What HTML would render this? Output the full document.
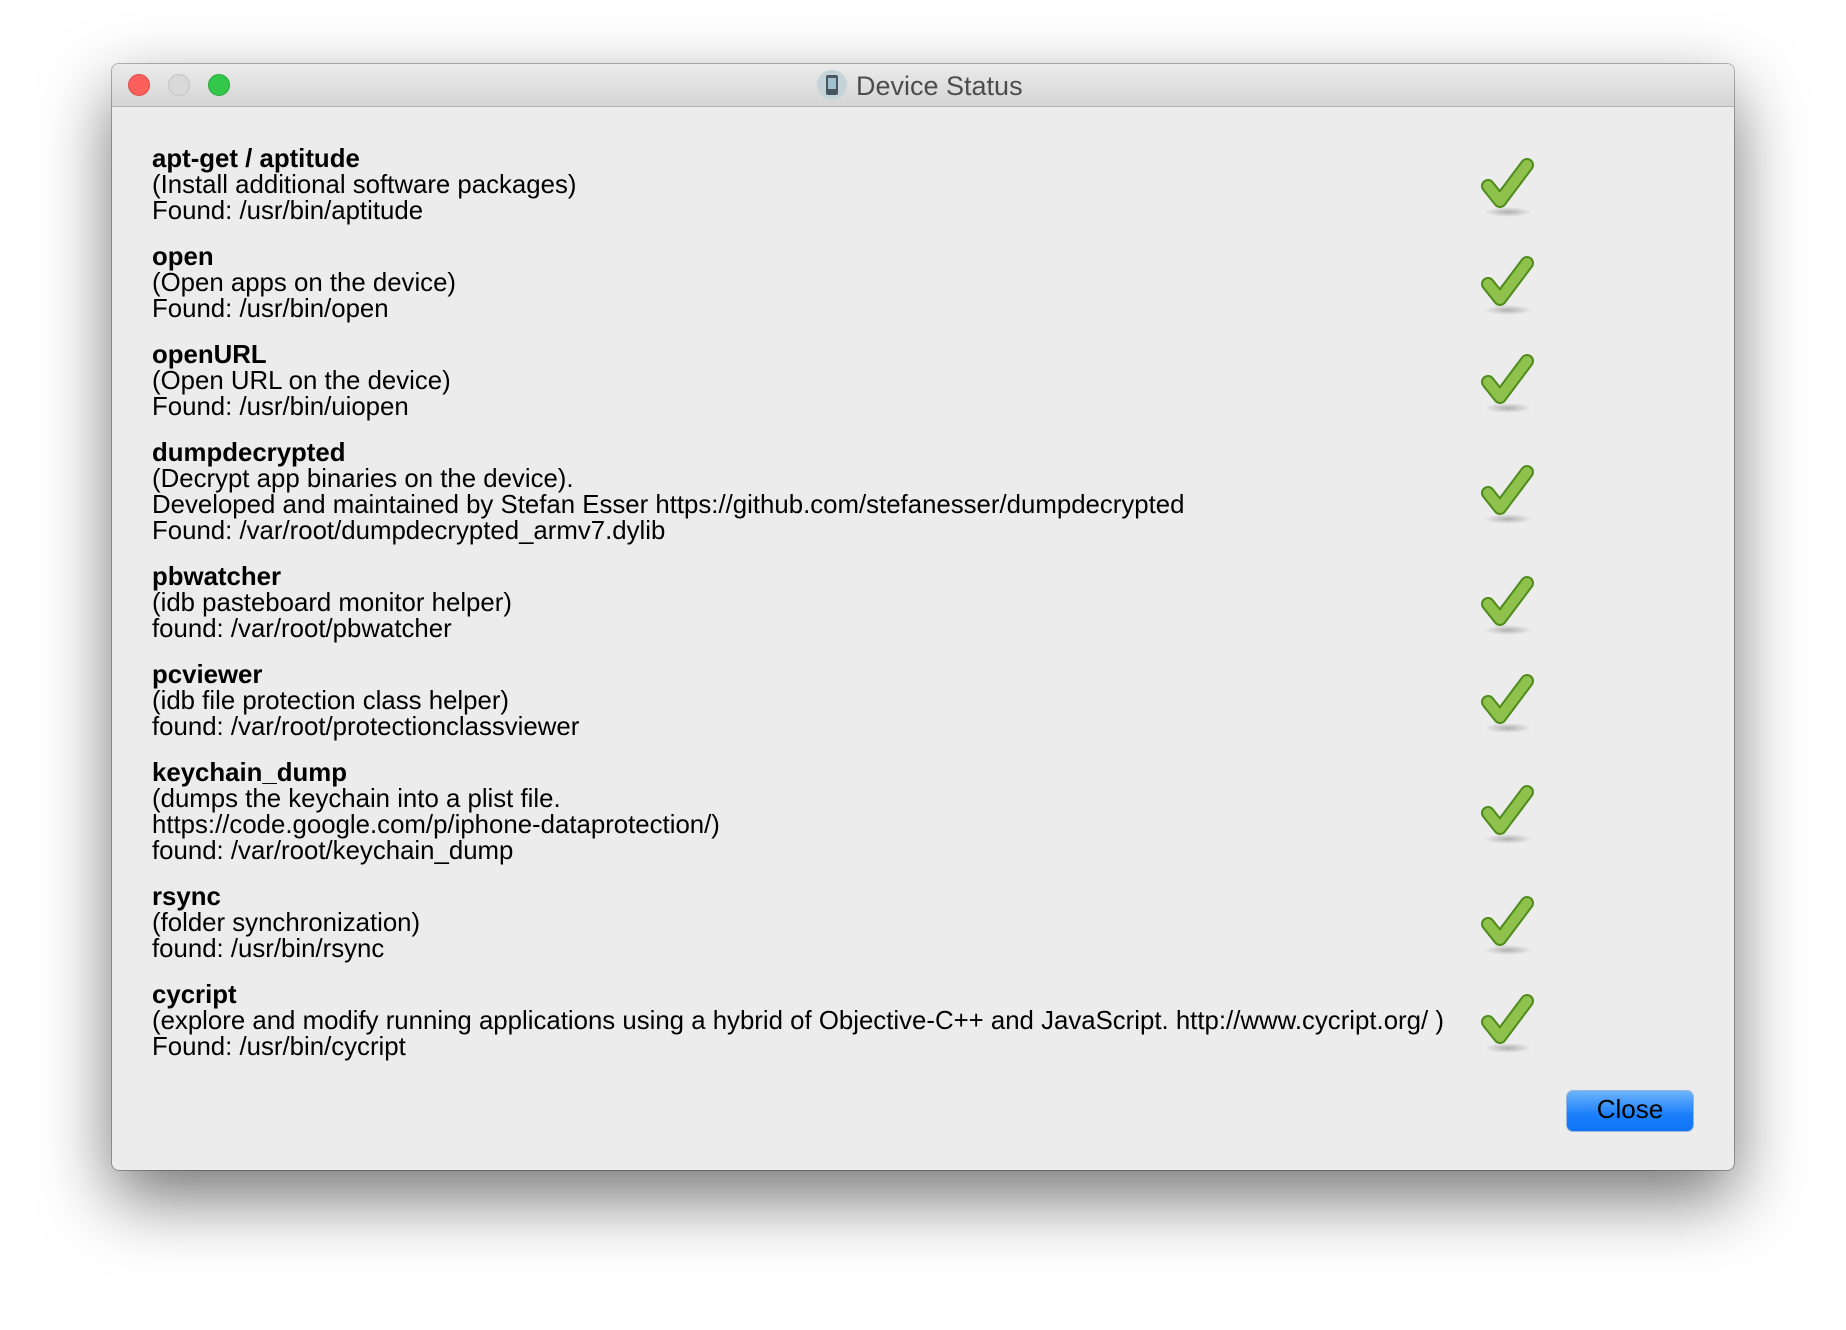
<!DOCTYPE html>
<html><head><meta charset="utf-8"><style>
html,body{margin:0;padding:0;width:1846px;height:1330px;background:#fff;overflow:hidden}
.win{position:absolute;left:112px;top:64px;width:1622px;height:1106px;background:#ececec;border-radius:7px;box-shadow:0 0 0 1px rgba(0,0,0,0.28),0 28px 70px rgba(0,0,0,0.55);overflow:hidden}
.tb{position:absolute;left:0;top:0;right:0;height:42px;background:linear-gradient(#ebebeb,#d5d5d5);border-bottom:1px solid #b3b3b3}
.dot{position:absolute;top:10px;width:22px;height:22px;border-radius:50%;box-sizing:border-box}
.title{position:absolute;left:704px;top:5px;font:27px "Liberation Sans",sans-serif;color:#4d4d4d;line-height:32px}
.items{position:absolute;left:40px;top:82px;font:25.8px "Liberation Sans",sans-serif;color:#000;line-height:26px}
.it{margin-bottom:20px;position:relative;width:1400px;white-space:nowrap}
.it b{font-weight:bold}
.ck{position:absolute;left:1326px;top:50%;margin-top:-29px}
.btn{position:absolute;left:1455px;top:1027px;width:126px;height:40px;border-radius:6px;background:linear-gradient(#6cb3fa,#1a7ffb 60%,#0f73f5);box-shadow:0 0 0 1px rgba(0,80,200,0.35);font:26px "Liberation Sans",sans-serif;text-align:center;line-height:36px;color:#000}
</style></head><body>
<div class="win">
<div class="tb">
<div class="dot" style="left:16px;background:#fc605c;border:1px solid #de4a45"></div>
<div class="dot" style="left:56px;background:#d9d9d9;border:1px solid #c2c2c2"></div>
<div class="dot" style="left:96px;background:#34c84a;border:1px solid #27a83a"></div>
<div class="title"><svg width="32" height="32" viewBox="0 0 32 32" style="vertical-align:-6px;margin-right:8px"><circle cx="16" cy="16" r="15" fill="#c3d3d8"/><rect x="10" y="6" width="12" height="20" rx="2" fill="#4a5560"/><rect x="12" y="9" width="8" height="11" fill="#9fc0cc"/></svg>Device Status</div>
</div>
<div class="items">
<div class="it"><b>apt-get / aptitude</b><br>(Install additional software packages)<br>Found: /usr/bin/aptitude<svg class="ck" width="60" height="64"><use href="#c"/></svg></div>
<div class="it"><b>open</b><br>(Open apps on the device)<br>Found: /usr/bin/open<svg class="ck" width="60" height="64"><use href="#c"/></svg></div>
<div class="it"><b>openURL</b><br>(Open URL on the device)<br>Found: /usr/bin/uiopen<svg class="ck" width="60" height="64"><use href="#c"/></svg></div>
<div class="it"><b>dumpdecrypted</b><br>(Decrypt app binaries on the device).<br>Developed and maintained by Stefan Esser https://github.com/stefanesser/dumpdecrypted<br>Found: /var/root/dumpdecrypted_armv7.dylib<svg class="ck" width="60" height="64"><use href="#c"/></svg></div>
<div class="it"><b>pbwatcher</b><br>(idb pasteboard monitor helper)<br>found: /var/root/pbwatcher<svg class="ck" width="60" height="64"><use href="#c"/></svg></div>
<div class="it"><b>pcviewer</b><br>(idb file protection class helper)<br>found: /var/root/protectionclassviewer<svg class="ck" width="60" height="64"><use href="#c"/></svg></div>
<div class="it"><b>keychain_dump</b><br>(dumps the keychain into a plist file.<br>https://code.google.com/p/iphone-dataprotection/)<br>found: /var/root/keychain_dump<svg class="ck" width="60" height="64"><use href="#c"/></svg></div>
<div class="it"><b>rsync</b><br>(folder synchronization)<br>found: /usr/bin/rsync<svg class="ck" width="60" height="64"><use href="#c"/></svg></div>
<div class="it"><b>cycript</b><br>(explore and modify running applications using a hybrid of Objective-C++ and JavaScript. http://www.cycript.org/ )<br>Found: /usr/bin/cycript<svg class="ck" width="60" height="64"><use href="#c"/></svg></div>
</div>
<div class="btn">Close</div>
</div>
<svg width="0" height="0" style="position:absolute"><defs>
<radialGradient id="sh"><stop offset="0" stop-color="#000" stop-opacity="0.25"/><stop offset="1" stop-color="#000" stop-opacity="0"/></radialGradient>
<g id="c"><ellipse cx="30" cy="56" rx="24" ry="5" fill="url(#sh)"/>
<polyline points="10,30 22,45 49,9" fill="none" stroke="#4f8a1c" stroke-width="14" stroke-linejoin="round" stroke-linecap="round"/>
<polyline points="10,30 22,45 49,9" fill="none" stroke="#8fc24c" stroke-width="10" stroke-linejoin="round" stroke-linecap="round"/>
</g></defs></svg>
</body></html>
